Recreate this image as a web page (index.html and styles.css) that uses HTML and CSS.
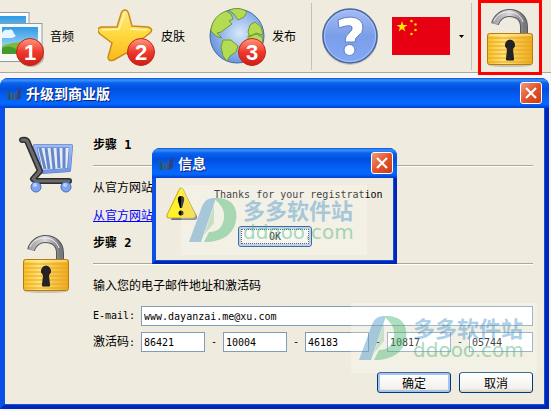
FILE: index.html
```html
<!DOCTYPE html>
<html lang="zh-CN">
<head>
<meta charset="utf-8">
<title>升级到商业版</title>
<link rel="stylesheet" href="styles.css">
</head>
<body>
<svg class="defs" aria-hidden="true">
  <defs>
    <linearGradient id="red" x1="0" y1="0" x2="0" y2="1"><stop offset="0" stop-color="#ff9a80"/><stop offset=".5" stop-color="#ee3a2c"/><stop offset="1" stop-color="#cf1c14"/></linearGradient>
    <linearGradient id="sky" x1="0" y1="0" x2="0" y2="1"><stop offset="0" stop-color="#2f9be6"/><stop offset="1" stop-color="#bfe6f8"/></linearGradient>
    <linearGradient id="gold" x1="0" y1="0" x2="0" y2="1"><stop offset="0" stop-color="#ffe98a"/><stop offset=".5" stop-color="#ffd83c"/><stop offset="1" stop-color="#fbb81c"/></linearGradient>
    <linearGradient id="help" x1="0" y1="0" x2="0" y2="1"><stop offset="0" stop-color="#a5bcf2"/><stop offset=".5" stop-color="#7b9eea"/><stop offset="1" stop-color="#82a8f4"/></linearGradient>
    <radialGradient id="sea" cx=".55" cy=".45" r=".55"><stop offset="0" stop-color="#d8e8fb"/><stop offset="1" stop-color="#6c98e0"/></radialGradient>
    <linearGradient id="steel" x1="0" y1="0" x2="1" y2="0"><stop offset="0" stop-color="#a5a5a8"/><stop offset=".5" stop-color="#dadadd"/><stop offset="1" stop-color="#77777c"/></linearGradient>
    <linearGradient id="brass" x1="0" y1="0" x2="1" y2="0"><stop offset="0" stop-color="#f7c024"/><stop offset=".35" stop-color="#ffe27a"/><stop offset="1" stop-color="#eda91c"/></linearGradient>
    <linearGradient id="basket" x1="0" y1="0" x2="0" y2="1"><stop offset="0" stop-color="#9dbaf6"/><stop offset="1" stop-color="#7498e6"/></linearGradient>
    <symbol id="padlock" viewBox="0 0 48 60">
      <ellipse cx="24" cy="57" rx="22" ry="2" fill="#c9c4b4"/>
      <path d="M9 16 C11 9 17 5 23 5 C33 5 38 11 38 19 V27" fill="none" stroke="#55555a" stroke-width="8"/>
      <path d="M9 16 C11 9 17 5 23 5 C33 5 38 11 38 19 V27" fill="none" stroke="url(#steel)" stroke-width="6"/>
      <path d="M8 13 C11 6 17 4 23 4 C30 4 35 8 37 14" fill="none" stroke="#f2f2f4" stroke-width="1"/>
      <rect x="1.500" y="25.500" width="45" height="31" rx="2" fill="url(#brass)" stroke="#b67c12"/>
      <path d="M2 30H46M2 34H46M2 38H46M2 42H46M2 46H46M2 50H46M2 54H46" stroke="#e9a820" stroke-width="1.500" opacity=".7"/>
      <path d="M3 27H45" stroke="#ffeda5"/>
      <path d="M24 32a5 5 0 0 1 2.500 9L27.500 52h-7L21.500 41A5 5 0 0 1 24 32z" fill="#242426" stroke="#1a1a1a"/>
    </symbol>
    <symbol id="app" viewBox="0 0 16 16">
      <path d="M1 4L5 7V15H1z" fill="#1f5f86"/><path d="M5 7L8 10V15H5z" fill="#2b6f8f"/><path d="M8 9L11 6V15H8z" fill="#49609a"/><path d="M11 6L15 1V13L11 15z" fill="#34437c"/><path d="M3 6V15M7 9V15M10 8V15M13 4V14" stroke="#174a93"/>
    </symbol>
    <symbol id="mark" viewBox="0 0 48 46">
      <path d="M24 1C16 2 14 6 11 15L0 45H12L27 1z" fill="#3d8fc4"/>
      <path d="M24 1C43 0 49 10 47 23C45 37 34 45 15 45L20 35C30 35 34 29 35 21C36 13 32 7 24 1z" fill="#3fb36b"/>
      <path d="M25 8V26L15 38z" fill="#3fb36b" opacity=".6"/>
    </symbol>
    <symbol id="cross" viewBox="0 0 20 20"><path d="M5 5L15 15M15 5L5 15" stroke="#fff" stroke-width="2.200"/></symbol>
  </defs>
</svg>

<header class="toolbar">
  <button class="tool">
    <svg width="44" height="72" viewBox="0 0 44 72" aria-hidden="true">
      <rect x="-12" y="12.500" width="41" height="38" fill="#fff" stroke="#919a9f"/><rect x="-8" y="16" width="34" height="30" fill="url(#sky)"/>
      <rect x="-4" y="23.500" width="46" height="38" fill="#f8f8f8" stroke="#919a9f"/><rect x="2" y="27" width="36" height="27" fill="url(#sky)"/>
      <path d="M2 33q3-5 6-3q5-2 6 4q4 2-2 4H2z" fill="#e8f7ff"/><path d="M2 46Q18 40 38 43V54H2z" fill="#7fb93a"/><path d="M2 48Q12 43 22 54H2z" fill="#459a2c"/>
      <circle cx="31" cy="53" r="14" fill="#b9b0a2"/><circle cx="30" cy="52" r="13.500" fill="url(#red)" stroke="#c3241a"/><text class="num" x="30" y="60">1</text>
    </svg>
    <span>音频</span>
  </button>
  <button class="tool">
    <svg width="57" height="72" viewBox="98 0 57 72" aria-hidden="true">
      <path d="M125 10q3 0 4 5L132 26L148 27q6 2 2 6L138 42L142 56q0 5-6 3L126 53L114 60q-6 2-6-3L112 43L100 34q-5-5 1-7L117 27L121 14q1-4 4-4z" fill="url(#gold)" stroke="#c98a18" stroke-width="1.500"/>
      <path d="M102 30L119 29L125 13M130 29L147 30" fill="none" stroke="#fff3b0" stroke-width="1.500"/>
      <circle cx="141" cy="52" r="13.500" fill="url(#red)" stroke="#c3241a"/><text class="num" x="141" y="60">2</text>
    </svg>
    <span>皮肤</span>
  </button>
  <button class="tool tool-last">
    <svg width="57" height="72" viewBox="209 0 57 72" aria-hidden="true">
      <circle cx="237" cy="36" r="27" fill="url(#sea)" stroke="#46699f"/>
      <g fill="#b5da54" stroke="#6f9c2c"><path d="M211 29Q213 16 226 11L231 14L233 19L229 21L232 24L225 29L221 32L217 33L222 38L216 36L211 31z"/><path d="M229 10Q240 6 247 12L244 17L238 20L234 14z"/><path d="M223 40L231 40L238 46L236 52L230 56L227 61L223 56L221 47z"/><path d="M250 25L255 22L261 27L263 35L256 33L250 37L248 32zM248 36L257 34L263 38L261 47L249 45z"/></g>
      <circle cx="252" cy="52" r="13.500" fill="url(#red)" stroke="#c3241a"/><text class="num" x="252" y="60">3</text>
    </svg>
    <span>发布</span>
  </button>
  <i class="sep"></i>
  <button class="tool tool-help" aria-label="帮助">
    <svg width="56" height="72" viewBox="0 0 56 72" aria-hidden="true">
      <circle cx="28" cy="37" r="28" fill="#cbc6b8"/><circle cx="28" cy="36" r="27" fill="url(#help)" stroke="#49679e" stroke-width="1.500"/><circle cx="28" cy="36" r="25.500" fill="none" stroke="#a9c4fa"/>
      <path d="M16 20Q22 17 29 17Q41 18 41 28Q41 33 36 36Q33 38 33 42H23Q23 36 27 33Q31 30 30 27Q28 24 17 28z" fill="#fff" stroke="#5f7fbd"/><circle cx="27.500" cy="50" r="5.500" fill="#fff" stroke="#5f7fbd"/>
    </svg>
  </button>
  <button class="tool tool-lang" aria-label="语言">
    <svg width="58" height="38" viewBox="0 0 58 38" aria-hidden="true"><rect width="58" height="38" fill="#e60012"/><path fill="#ffe600" d="M10 4l1.300 4H15.500l-3.400 2.500 1.300 4L10 12l-3.400 2.500 1.300-4L4.500 8H8.700z"/><g fill="#f5d800"><circle cx="19.500" cy="4" r="1.300"/><circle cx="23.500" cy="7.500" r="1.300"/><circle cx="23.500" cy="13" r="1.300"/><circle cx="19.500" cy="17" r="1.300"/></g></svg>
    <svg class="caret" width="5" height="3" viewBox="0 0 5 3" aria-hidden="true"><path d="M0 0H5L2.500 3z"/></svg>
  </button>
  <i class="sep"></i>
  <button class="unlock" aria-label="激活"><svg width="48" height="60"><use href="#padlock"/></svg></button>
</header>

<main class="window">
  <div class="titlebar">
    <svg class="app" width="16" height="16"><use href="#app"/></svg>
    <h1>升级到商业版</h1>
    <button class="close" aria-label="关闭"><svg width="20" height="20"><use href="#cross"/></svg></button>
  </div>
  <form class="body">
    <section class="step">
      <svg width="56" height="60" viewBox="0 0 56 60" aria-hidden="true">
        <path d="M17 10H53L51 34H23z" fill="#e6ebf5"/>
        <path d="M17 10H53L51 34L23 36z" fill="none" stroke="#5374b8" stroke-width="4" stroke-linejoin="round"/>
        <path d="M17 10H53L51 34L23 36z" fill="none" stroke="url(#basket)" stroke-width="3" stroke-linejoin="round"/>
        <path d="M22 12L27 33M28 12L31 33M34 12L36 33M40 12L41 32M46 12V32" stroke="#6687cb" stroke-width="3"/>
        <path d="M4 4Q9 3 10 7L22 35L15 43L18 45H51" fill="none" stroke="#2e2e30" stroke-width="6" stroke-linecap="round" stroke-linejoin="round"/>
        <path d="M4 4Q9 3 10 7L22 35L15 43L18 45H51" fill="none" stroke="#6b6b6b" stroke-width="3" stroke-linecap="round" stroke-linejoin="round"/>
        <circle cx="18" cy="51" r="5" fill="#7ea4f1" stroke="#4a6cb4"/><circle cx="48" cy="51" r="5" fill="#7ea4f1" stroke="#4a6cb4"/><circle cx="17" cy="49" r="2" fill="#bcd1fb"/><circle cx="47" cy="49" r="2" fill="#bcd1fb"/>
      </svg>
      <div>
        <h2>步骤<span class="latin"> 1</span></h2>
        <hr>
        <p>从官方网站</p>
        <p><a href="#">从官方网站</a></p>
      </div>
    </section>
    <section class="step">
      <svg class="lock" width="48" height="60"><use href="#padlock"/></svg>
      <div>
        <h2>步骤<span class="latin"> 2</span></h2>
        <hr>
        <p class="hint">输入您的电子邮件地址和激活码</p>
        <div class="field"><label class="latin" for="email">E-mail:</label><input id="email" type="text" value="www.dayanzai.me@xu.com"></div>
        <div class="field">
          <label for="code">激活码<span class="latin">:</span></label>
          <div class="codes">
            <input id="code" type="text" value="86421"><span>-</span><input aria-label="激活码 2" type="text" value="10004"><span>-</span><input aria-label="激活码 3" type="text" value="46183"><span>-</span><input aria-label="激活码 4" type="text" value="10817"><span>-</span><input aria-label="激活码 5" type="text" value="05744">
          </div>
        </div>
      </div>
    </section>
    <div class="actions"><button class="btn primary" type="button">确定</button><button class="btn" type="button">取消</button></div>
  </form>
  <div class="watermark watermark-page" aria-hidden="true"><svg width="48" height="46"><use href="#mark"/></svg><div><b>多多软件站</b><span>ddooo.com</span></div></div>

  <div class="window alert" role="dialog" aria-labelledby="alert-title">
    <div class="titlebar">
      <svg class="app" width="16" height="16"><use href="#app"/></svg>
      <h1 id="alert-title">信息</h1>
      <button class="close" aria-label="关闭"><svg width="20" height="20"><use href="#cross"/></svg></button>
    </div>
    <div class="alert-body">
      <svg width="32" height="34" viewBox="0 0 32 34" aria-hidden="true"><path d="M17 3L31 29Q32 33 28 33H5z" fill="#626ba0"/><path d="M14.500 1Q16 0 17.500 3L29 27Q30 31 27 31H3Q0 31 1 28L13 3z" fill="#fff22d" stroke="#c4a41d"/><path d="M16 3L28 27Q29 30 27 30H14z" fill="#f7d813"/><path d="M15 9q4 0 3 5l-2 7h-2l-2-7q-1-5 3-5z"/><circle cx="15" cy="26" r="2.500"/></svg>
      <p class="latin">Thanks for your registration</p>
      <button class="btn primary focus latin" type="button">OK</button>
    </div>
    <div class="watermark watermark-alert" aria-hidden="true"><svg width="48" height="46"><use href="#mark"/></svg><div><b>多多软件站</b><span>ddooo.com</span></div></div>
  </div>
</main>
</body>
</html>
```
FILE: styles.css
```css
* { box-sizing: border-box; }

body {
  margin: 0;
  background: #f7f6f4;
  color: #000;
  font: 12px/16px "Noto Sans CJK SC", sans-serif;
}

button, input { font: inherit; color: inherit; }
button { padding: 0; }
svg { display: block; flex: none; }
h1, h2, p { margin: 0; }
.defs { position: absolute; width: 0; height: 0; }
.latin, input, .codes { font-family: "DejaVu Sans Mono", monospace; font-size: 10px; }

.toolbar {
  display: flex;
  align-items: center;
  height: 73px;
  background: #efebde;
  border-bottom: 1px solid #aca899;
}
.tool {
  display: flex;
  align-items: center;
  gap: 6px;
  margin-right: 24px;
  border: 0;
  background: none;
  white-space: nowrap;
}
.tool-last { margin-right: 15px; }
.tool-help { margin: 0 14px 0 10px; }
.tool-lang { gap: 9px; margin-right: 7px; }
.num {
  fill: #fff;
  font: bold 22px "Liberation Sans", sans-serif;
  text-anchor: middle;
}
.sep {
  width: 1px;
  height: 67px;
  background: #c5c2b5;
}
.unlock {
  align-self: flex-start;
  display: flex;
  justify-content: center;
  align-items: center;
  width: 64px;
  height: 75px;
  margin-left: 6px;
  border: 3px solid #f00;
  background: none;
}

.window {
  position: relative;
  margin: 5px 2px 0 0;
  background: #efebde;
  border: 4px solid #0831d9;
  border-color: #0a50e8 #0026b8 #0026b8 #0a50e8;
  border-top: 0;
  border-radius: 8px 8px 0 0;
  box-shadow: inset 0 0 0 1px #0855dd;
}
.titlebar {
  display: flex;
  align-items: center;
  gap: 4px;
  height: 30px;
  margin: 0 -4px;
  padding: 0 7px 0 6px;
  border-radius: 8px 8px 0 0;
  background: linear-gradient(#0753d2 0, #3c94ff 2px, #0a62ed 5px, #0050e0 11px, #0562f8 21px, #0368ff 26px, #003dd0 30px);
  color: #fff;
}
.titlebar h1 {
  flex: 1;
  font-size: 14px;
  line-height: 20px;
  text-shadow: 1px 1px 0 #0b1f70;
}
.close {
  width: 22px;
  height: 22px;
  border: 1px solid #fff;
  border-radius: 3px;
  background: linear-gradient(135deg, #f09a7c, #e4532c 50%, #c93c12);
}

.body { padding: 28px 12px 12px 14px; }
.step {
  display: grid;
  grid-template-columns: 75px 1fr;
  height: 98px;
}
.step + .step { height: 138px; }
.lock { margin-left: 4px; }
.step h2 {
  font-size: 12px;
  line-height: 16px;
}
.step h2 .latin {
  font-size: 12px;
  white-space: pre;
}
.step hr {
  margin: 12px 0;
  border: 0;
  border-top: 1px solid #aca899;
  border-bottom: 1px solid #fff;
}
.step p + p { margin-top: 12px; }
.step a { color: #00f; }
.step .hint { margin-bottom: 13px; }
.field {
  display: grid;
  grid-template-columns: 48px 1fr;
  align-items: center;
  margin-bottom: 6px;
}
.codes {
  display: grid;
  grid-template-columns: 1fr 18px 1fr 18px 1fr 18px 1fr 18px 1fr;
  align-items: center;
  text-align: center;
}
input {
  width: 100%;
  min-width: 0;
  height: 20px;
  padding: 0 2px;
  border: 1px solid #7f9db9;
  background: #fff;
}
.actions {
  display: flex;
  justify-content: flex-end;
  gap: 8px;
}
.btn {
  width: 74px;
  height: 21px;
  border: 1px solid #003c74;
  border-radius: 3px;
  background: linear-gradient(#fff, #f3f2ec 80%, #d8d2c5);
  line-height: 16px;
}
.primary { box-shadow: inset 0 0 0 2px #a9c2f0; }
.focus {
  outline: 1px dotted #333;
  outline-offset: -4px;
}

.alert {
  position: absolute;
  top: 70px;
  left: 0;
  right: 0;
  width: 245px;
  margin: 0 auto;
  border-width: 0 3px 3px;
}
.alert .titlebar {
  margin: 0 -3px;
  padding-right: 4px;
}
.alert-body {
  display: grid;
  grid-template-columns: 32px 1fr;
  column-gap: 16px;
  padding: 9px 10px 14px 11px;
}
.alert-body .btn {
  grid-column: 1 / -1;
  justify-self: center;
  margin-top: 5px;
}

.watermark {
  position: absolute;
  display: flex;
  gap: 6px;
  width: 186px;
  padding: 12px 8px;
  background: rgba(255, 255, 255, .25);
  pointer-events: none;
}
.watermark-page { right: 8px; bottom: 32px; }
.watermark-alert { left: 26px; bottom: 6px; }
.watermark svg, .watermark div { opacity: .42; }
.watermark b, .watermark span { display: block; white-space: nowrap; }
.watermark b {
  color: #3b91c7;
  font-size: 22px;
  line-height: 24px;
}
.watermark span {
  color: #36ad62;
  font: 20px/22px "DejaVu Sans", sans-serif;
}
```
